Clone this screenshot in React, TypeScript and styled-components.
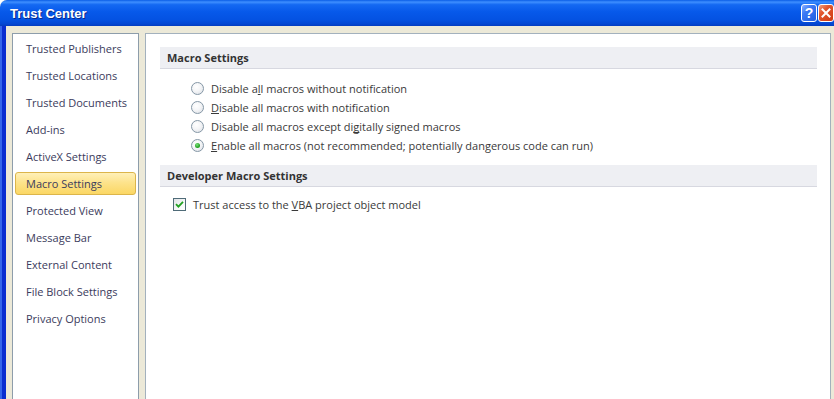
import React from "react";
import styled, { createGlobalStyle } from "styled-components";

const GlobalStyle = createGlobalStyle`
  html, body { margin: 0; padding: 0; background: #ffffff; overflow: hidden; }
  #root { width: 834px; height: 399px; }
`;

const Window = styled.div`
  width: 834px;
  height: 399px;
  display: flex;
  flex-direction: column;
  border-top-left-radius: 7px;
  overflow: hidden;
  background: #ece9d8;
`;

const TitleBar = styled.div`
  height: 26px;
  flex: none;
  display: flex;
  align-items: center;
  justify-content: space-between;
  padding-left: 10px;
  background: linear-gradient(
    to bottom,
    #0a5de6 0%,
    #3e8fff 8%,
    #1469f2 18%,
    #0759ea 45%,
    #0452e2 75%,
    #0447d2 92%,
    #043cbf 100%
  );
`;

const Title = styled.span`
  font-family: "Liberation Sans", Arial, sans-serif;
  font-weight: bold;
  font-size: 13px;
  color: #ffffff;
  text-shadow: 1px 1px 0 #0a2a8a;
  margin-top: 1px;
`;

const Buttons = styled.div`
  display: flex;
  gap: 1px;
  align-self: flex-start;
  margin-top: 4px;
`;

const CaptionButton = styled.div<{ $kind: "help" | "close" }>`
  width: 16px;
  height: 18px;
  box-sizing: border-box;
  border: 1px solid #ffffff;
  border-radius: 3px;
  display: flex;
  align-items: center;
  justify-content: center;
  background: ${(p) =>
    p.$kind === "close"
      ? "linear-gradient(135deg, #f0a080 0%, #e2572f 35%, #cf3a12 100%)"
      : "linear-gradient(135deg, #8cb2ff 0%, #3d7af5 35%, #1f5ce0 100%)"};
  color: #ffffff;
  font-family: "Liberation Sans", Arial, sans-serif;
  font-weight: bold;
  font-size: 14px;
  line-height: 1;
`;

const Body = styled.div`
  flex: 1;
  display: flex;
  gap: 6px;
  padding: 7px 3px 0 10px;
  border-left: 2px solid #3566ea;
  box-shadow: inset 4px 0 0 #0a2ed0;
  min-height: 0;
`;

const NavPanel = styled.nav`
  width: 127px;
  flex: none;
  box-sizing: border-box;
  background: #ffffff;
  border: 1px solid #8d9dab;
  border-bottom: none;
  padding: 3px 2px 0 2px;
  display: flex;
  flex-direction: column;
  gap: 4px;
`;

const NavItem = styled.div<{ $active?: boolean }>`
  height: 23px;
  box-sizing: border-box;
  display: flex;
  align-items: center;
  padding-left: 10px;
  border-radius: 3px;
  font-family: "Open Sans", "Noto Sans", sans-serif;
  font-size: 11px;
  color: #3b3b5c;
  border: 1px solid ${(p) => (p.$active ? "#dcb54a" : "transparent")};
  background: ${(p) =>
    p.$active
      ? "linear-gradient(to bottom, #fff0b8 0%, #fde38c 45%, #fbd764 100%)"
      : "transparent"};
`;

const MainPanel = styled.main`
  flex: 1;
  box-sizing: border-box;
  background: #ffffff;
  border: 1px solid #a3b1bd;
  border-bottom: none;
  padding: 13px 13px 0 14px;
  display: flex;
  flex-direction: column;
`;

const SectionHeader = styled.div`
  height: 22px;
  box-sizing: border-box;
  background: #eeeff3;
  border-bottom: 1px solid #d7d8e0;
  padding-left: 7px;
  padding-bottom: 1px;
  display: flex;
  align-items: center;
  font-family: "Open Sans", "Noto Sans", sans-serif;
  font-weight: bold;
  font-size: 11px;
  color: #333333;
`;

const OptionList = styled.div<{ $indent: number; $top: number; $bottom: number }>`
  display: flex;
  flex-direction: column;
  padding: ${(p) => `${p.$top}px 0 ${p.$bottom}px ${p.$indent}px`};
`;

const OptionRow = styled.label`
  height: 19px;
  display: flex;
  align-items: center;
  gap: 7px;
  font-family: "Open Sans", "Noto Sans", sans-serif;
  font-size: 11px;
  color: #3a3a3a;
  white-space: nowrap;
`;

const Radio = styled.span<{ $checked?: boolean }>`
  width: 13px;
  height: 13px;
  box-sizing: border-box;
  border-radius: 50%;
  border: 1px solid #8597a6;
  background: radial-gradient(circle at 40% 35%, #ffffff 0%, #f4f5f7 45%, #d9dde3 100%);
  display: flex;
  align-items: center;
  justify-content: center;
  flex: none;
  &::after {
    content: "";
    display: ${(p) => (p.$checked ? "block" : "none")};
    width: 5px;
    height: 5px;
    border-radius: 50%;
    background: radial-gradient(circle at 40% 35%, #7ee07e 0%, #24a424 60%, #178a17 100%);
  }
`;

const Checkbox = styled.span`
  width: 13px;
  height: 13px;
  box-sizing: border-box;
  border: 1px solid #4f6b78;
  background: linear-gradient(135deg, #dfe3e6 0%, #f7f8f9 60%, #ffffff 100%);
  display: flex;
  align-items: center;
  justify-content: center;
  flex: none;
`;

const U = styled.span`
  text-decoration: underline;
  text-decoration-skip-ink: none;
`;

const navItems = [
  "Trusted Publishers",
  "Trusted Locations",
  "Trusted Documents",
  "Add-ins",
  "ActiveX Settings",
  "Macro Settings",
  "Protected View",
  "Message Bar",
  "External Content",
  "File Block Settings",
  "Privacy Options",
];

export default function App() {
  return (
    <>
      <GlobalStyle />
      <Window>
        <TitleBar>
          <Title>Trust Center</Title>
          <Buttons>
            <CaptionButton $kind="help">?</CaptionButton>
            <CaptionButton $kind="close">
              <svg width="10" height="10" viewBox="0 0 10 10">
                <path d="M1.5 1.5 L8.5 8.5 M8.5 1.5 L1.5 8.5" stroke="#fff" strokeWidth="2" strokeLinecap="square" />
              </svg>
            </CaptionButton>
          </Buttons>
        </TitleBar>
        <Body>
          <NavPanel>
            {navItems.map((n) => (
              <NavItem key={n} $active={n === "Macro Settings"}>
                {n}
              </NavItem>
            ))}
          </NavPanel>
          <MainPanel>
            <SectionHeader>Macro Settings</SectionHeader>
            <OptionList $indent={31} $top={10} $bottom={10}>
              <OptionRow>
                <Radio />
                <span>
                  Disable a<U>l</U>l macros without notification
                </span>
              </OptionRow>
              <OptionRow>
                <Radio />
                <span>
                  <U>D</U>isable all macros with notification
                </span>
              </OptionRow>
              <OptionRow>
                <Radio />
                <span>
                  Disable all macros except di<U>g</U>itally signed macros
                </span>
              </OptionRow>
              <OptionRow>
                <Radio $checked />
                <span>
                  <U>E</U>nable all macros (not recommended; potentially dangerous code can run)
                </span>
              </OptionRow>
            </OptionList>
            <SectionHeader>Developer Macro Settings</SectionHeader>
            <OptionList $indent={13} $top={8} $bottom={0}>
              <OptionRow>
                <Checkbox>
                  <svg width="9" height="9" viewBox="0 0 9 9">
                    <path d="M1 4.2 L3.4 6.6 L8 1.8" stroke="#21a121" strokeWidth="1.8" fill="none" />
                  </svg>
                </Checkbox>
                <span>
                  Trust access to the <U>V</U>BA project object model
                </span>
              </OptionRow>
            </OptionList>
          </MainPanel>
        </Body>
      </Window>
    </>
  );
}
